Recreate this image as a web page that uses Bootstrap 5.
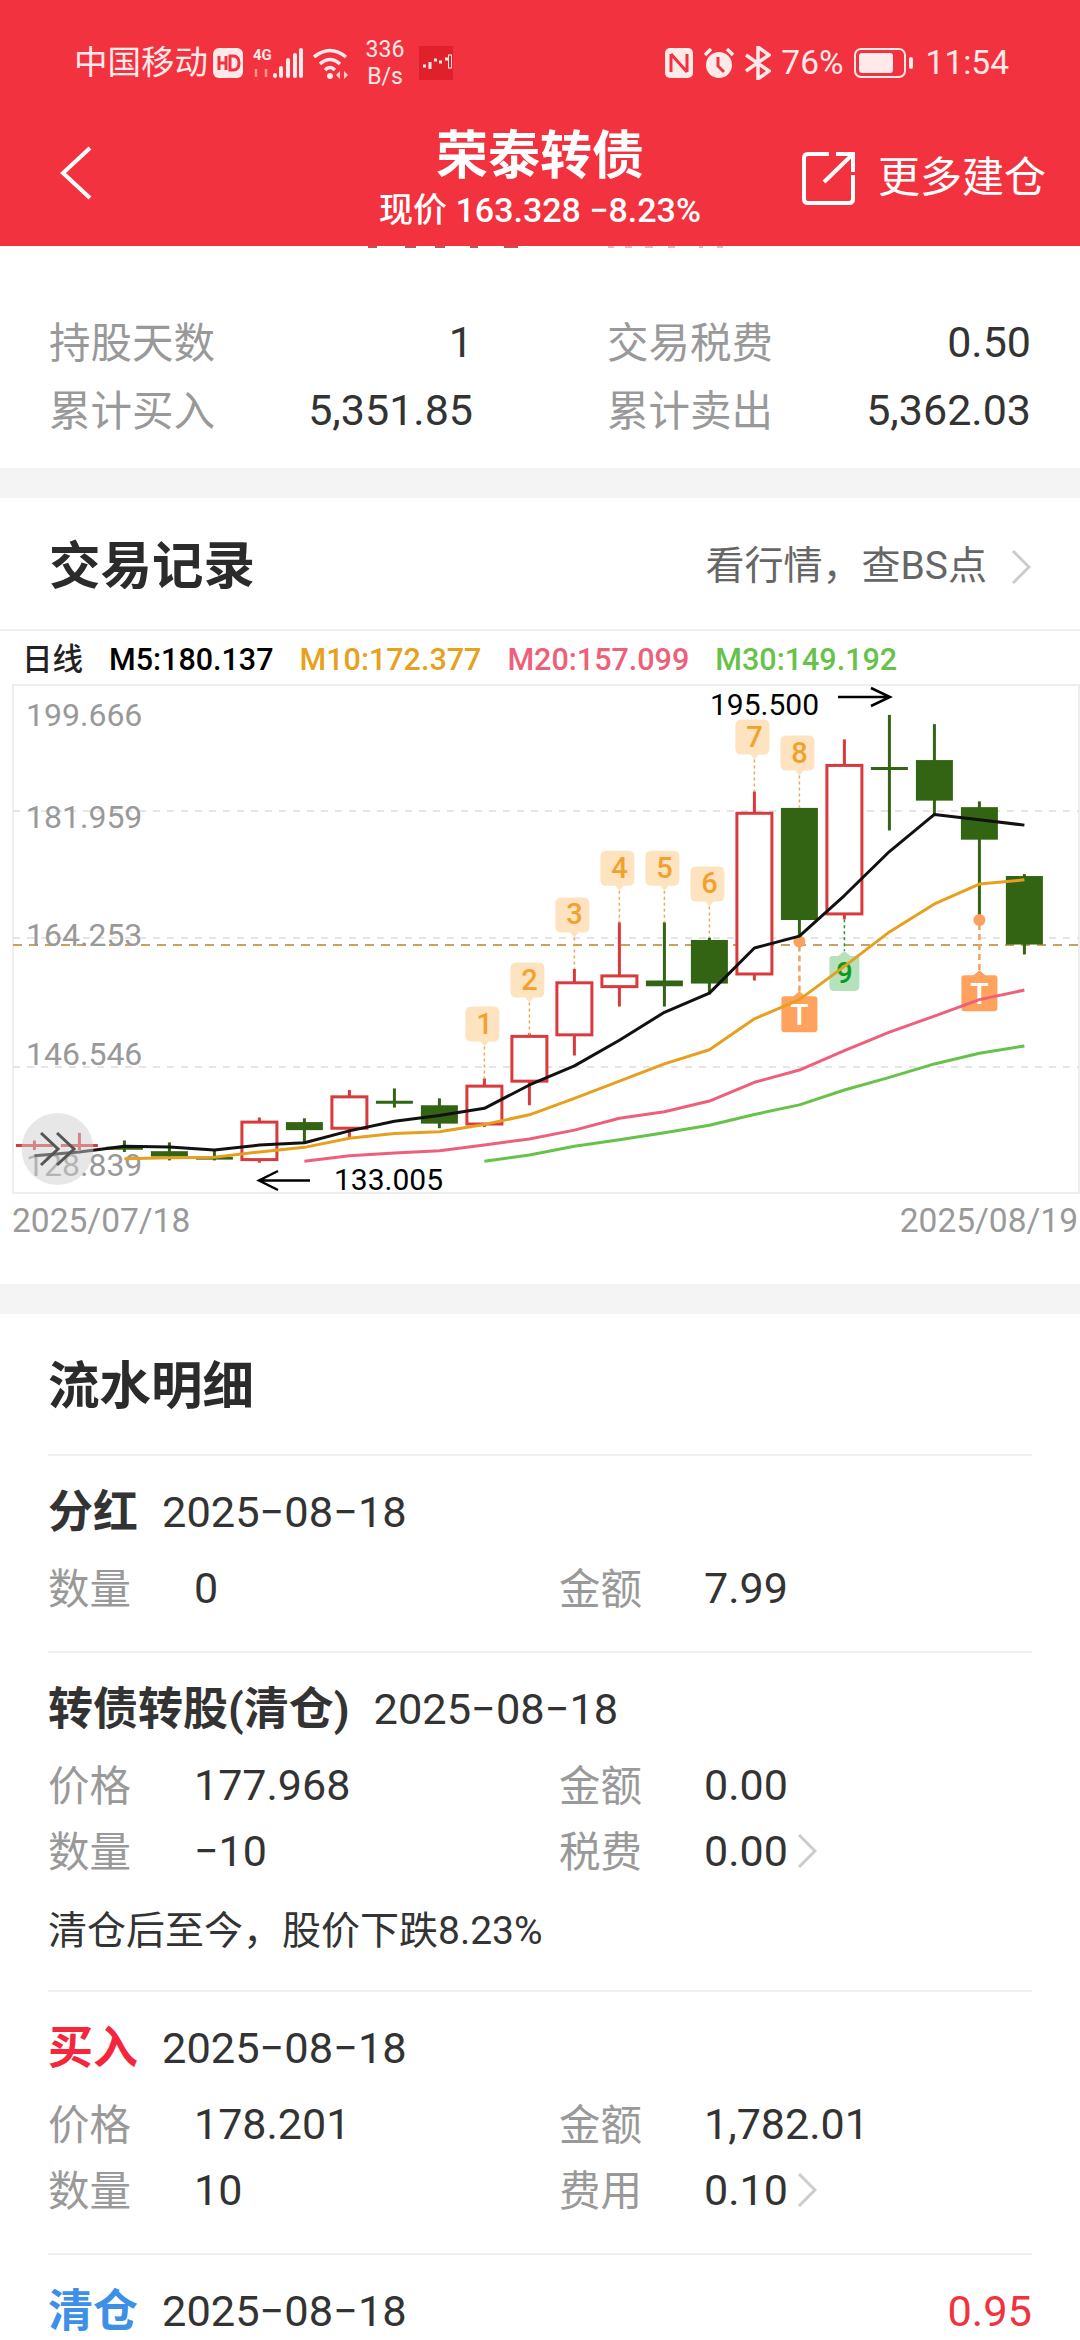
<!DOCTYPE html>
<html lang="zh-CN">
<head>
  <meta charset="UTF-8" />
  <meta name="viewport" content="width=device-width, initial-scale=1" />
  <title>荣泰转债</title>
  <link href="https://cdn.jsdelivr.net/npm/bootstrap@5.3.2/dist/css/bootstrap.min.css" rel="stylesheet" />
  <style>
    html, body { width: 1080px; height: 2340px; overflow: hidden; }
    body { font-family: Roboto, "Noto Sans CJK SC", sans-serif; color: #333; background: #fff; }
    svg { display: block; flex: none; }

    /* 顶部红色栏 */
    .top-bar { height: 246px; background: #f2323e; color: #fff; }
    .status-row { height: 126px; padding: 0 71px 0 74px; color: #ffe9e9; font-size: 33.5px; line-height: 1; }
    .status-left { gap: 10px; }
    .carrier-name { margin-right: -5px; }
    .status-right { gap: 10px; }
    .battery-icon { margin-right: 2px; }
    .speed-text { width: 40px; font-size: 23px; line-height: 27px; text-align: center; margin: 0 4px; }
    .nav-row { display: grid; grid-template-columns: 1fr auto 1fr; padding: 0 37px; }
    .nav-side { margin-top: 20px; }
    .nav-back { margin-left: 23px; }
    .nav-title { font-size: 52px; font-weight: 700; line-height: 56px; text-align: center; margin-top: 3px; }
    .nav-sub { font-size: 34px; font-weight: 500; line-height: 44px; text-align: center; margin-top: 3px; }
    .nav-more { font-size: 42px; gap: 22px; margin-right: -3px; }
    .clip-row { height: 4px; }

    /* 持仓统计 */
    .stat-box { height: 218px; padding: 60px 49px 0; }
    .stat-grid { display: grid; grid-template-columns: 424px 424px; column-gap: 134px; row-gap: 0; }
    .stat-cell { height: 68px; }
    .label-gray { color: #999; font-size: 41.5px; }
    .value-num { color: #333; font-size: 43px; margin-bottom: 4px; }
    .gap-band { height: 30px; background: #f4f4f4; }

    .head-row { height: 133px; padding: 6px 49px 0; border-bottom: 2px solid #f0f0f0; }
    .head-title { font-size: 51.5px; font-weight: 700; color: #2b2b2b; }
    .head-link { font-size: 39px; color: #666; gap: 24px; }

    /* K线 */
    .legend-row { height: 51px; padding: 8px 0 0 22px; column-gap: 26px; font-size: 30.5px; font-weight: 500; line-height: 1; color: #222; }
    .ma-10 { color: #e8a020; }
    .ma-20 { color: #ee6079; }
    .ma-30 { color: #66c24a; }
    .date-row { height: 88px; padding: 3px 2px 0 12px; font-size: 33.5px; line-height: 44px; color: #999; }

    /* 流水明细 */
    .flow-head { height: 140px; padding: 6px 48px 0; }
    .flow-wrap { padding: 0 48px; }
    .flow-item { border-top: 2px solid #f0f0f0; padding: 27px 0 29px; }
    .flow-title { height: 60px; gap: 24px; font-size: 43.4px; color: #333; }
    .flow-kind { font-size: 45px; font-weight: 700; }
    .kind-buy { color: #f5263c; }
    .kind-clear { color: #3d8fe8; }
    .flow-profit { color: #f2323e; }
    .flow-rows { margin-top: 13px; }
    .flow-grid { display: grid; grid-template-columns: 146px 365px 145px 1fr; height: 66px; align-items: center; }
    .flow-note { font-size: 39px; line-height: 60px; margin-top: 16px; color: #333; }
    .flow-value { gap: 9px; }
  </style>
</head>
<body>
  <header class="top-bar">
    <div class="status-row d-flex justify-content-between align-items-center">
      <div class="status-left d-flex align-items-center">
        <span class="carrier-name">中国移动</span>
        <svg width="30" height="30" viewBox="0 0 30 30"><rect width="30" height="30" rx="6" fill="#ffe9e9"/><path d="M6 8v14M6 15h7M13 8v14M17 8v14h3q6 0 6-7t-6-7z" fill="none" stroke="#f2323e" stroke-width="3"/></svg>
        <svg width="50" height="32" viewBox="0 0 50 32"><text x="0" y="13" font-size="15" font-weight="700" fill="#ffe9e9" font-family="Roboto">4G</text><path d="M3 30V22M13 30V22" stroke="#f98" stroke-width="2.5"/><rect x="20" y="26" width="4" height="5" rx="2" fill="#ffe9e9"/><rect x="26" y="19" width="4" height="12" rx="2" fill="#ffe9e9"/><rect x="33" y="11" width="4" height="20" rx="2" fill="#ffe9e9"/><rect x="40" y="6" width="4" height="25" rx="2" fill="#ffe9e9"/><rect x="46" y="1" width="4" height="30" rx="2" fill="#ffe9e9"/></svg>
        <svg width="38" height="32" viewBox="0 0 38 32"><path d="M1 10Q17-3 33 10M7 17Q17 8 27 17M12 23Q17 18 22 23" fill="none" stroke="#ffe9e9" stroke-width="3.5"/><circle cx="17" cy="29" r="3" fill="#ffe9e9"/><path d="M27 24v8l-4-4zM31 24v8l4-4z" fill="#ffd0d0"/></svg>
        <div class="speed-text">336<br>B/s</div>
        <svg width="34" height="34" viewBox="0 0 34 34"><rect width="34" height="34" fill="#e0202a"/><path d="M4 20h3M11 16v7M15 14h3M20 16h3M26 13h3" stroke="#ffe9e9" stroke-width="3"/><rect x="29.5" y="9" width="3" height="13" fill="none" stroke="#ffe9e9"/></svg>
      </div>
      <div class="status-right d-flex align-items-center">
        <svg width="28" height="30" viewBox="0 0 28 30"><rect width="28" height="30" rx="5" fill="#ffe9e9"/><path d="M6 6v18M22 6v18M6 6l16 18" fill="none" stroke="#f2323e" stroke-width="3"/></svg>
        <svg width="32" height="32" viewBox="0 0 32 32"><path d="M2 8l6-6M30 8l-6-6" stroke="#ffe9e9" stroke-width="3.5"/><circle cx="16" cy="18" r="13" fill="#ffe9e9"/><path d="M15 10v9l6 6" fill="none" stroke="#f2323e" stroke-width="3"/></svg>
        <svg width="26" height="34" viewBox="0 0 26 34"><path d="M1 9l23 16-11 8V1l11 8L1 25" fill="none" stroke="#ffe9e9" stroke-width="3.5"/></svg>
        <span>76%</span>
        <svg class="battery-icon" width="60" height="30" viewBox="0 0 60 30"><rect x="1" y="1" width="50" height="28" rx="6" fill="none" stroke="#ffe9e9" stroke-width="2"/><rect x="5" y="5" width="34" height="20" rx="3" fill="#ffe9e9"/><rect x="55" y="9" width="4" height="12" rx="2" fill="#ffe9e9"/></svg>
        <span>11:54</span>
      </div>
    </div>
    <div class="nav-row">
      <svg class="nav-back nav-side align-self-start" width="32" height="54" viewBox="0 0 32 54"><path d="M30 2L3 27l27 25" fill="none" stroke="#fff" stroke-width="4"/></svg>
      <div>
        <div class="nav-title">荣泰转债</div>
        <div class="nav-sub">现价 163.328 −8.23%</div>
      </div>
      <div class="nav-more nav-side d-flex justify-content-end align-items-center align-self-start">
        <svg width="54" height="54" viewBox="0 0 54 54"><path d="M27 3H6q-4 0-4 4v41q0 4 4 4h41q4 0 4-4V24M22 31L51 3M34 3h17v18" fill="none" stroke="#fff" stroke-width="4"/></svg>
        <span>更多建仓</span>
      </div>
    </div>
  </header>

  <svg class="clip-row" width="1080" height="4" viewBox="0 0 1080 4">
    <path d="M368 1h9M405 1h11M435 1h10M470 1h8M504 1h14" stroke="#c0505a" stroke-width="2"/>
    <path d="M608 1h6M625 1h7M645 1h8M668 1h7M699 1h4M717 1h6" stroke="#e8b8bc" stroke-width="2"/>
  </svg>

  <section class="stat-box">
    <div class="stat-grid">
      <div class="stat-cell d-flex justify-content-between align-items-center"><span class="label-gray">持股天数</span><span class="value-num">1</span></div>
      <div class="stat-cell d-flex justify-content-between align-items-center"><span class="label-gray">交易税费</span><span class="value-num">0.50</span></div>
      <div class="stat-cell d-flex justify-content-between align-items-center"><span class="label-gray">累计买入</span><span class="value-num">5,351.85</span></div>
      <div class="stat-cell d-flex justify-content-between align-items-center"><span class="label-gray">累计卖出</span><span class="value-num">5,362.03</span></div>
    </div>
  </section>
  <div class="gap-band"></div>

  <div class="head-row d-flex justify-content-between align-items-center">
    <span class="head-title">交易记录</span>
    <span class="head-link d-flex align-items-center">
      <span>看行情，查BS点</span>
      <svg width="20" height="34" viewBox="0 0 20 34"><path d="M2 1l16 16L2 33" fill="none" stroke="#ccc" stroke-width="3"/></svg>
    </span>
  </div>

  <div class="legend-row d-flex align-items-center">
    <span>日线</span>
    <span class="text-black">M5:180.137</span>
    <span class="ma-10">M10:172.377</span>
    <span class="ma-20">M20:157.099</span>
    <span class="ma-30">M30:149.192</span>
  </div>
  <svg id="kline" width="1080" height="514" viewBox="0 682 1080 514"></svg>
  <div class="date-row d-flex justify-content-between">
    <span>2025/07/18</span>
    <span>2025/08/19</span>
  </div>
  <div class="gap-band"></div>

  <div class="flow-head d-flex align-items-center"><span class="head-title">流水明细</span></div>
  <div class="flow-wrap">
    <div class="flow-item">
      <div class="flow-title d-flex align-items-center"><span class="flow-kind">分红</span><span>2025−08−18</span></div>
      <div class="flow-rows">
        <div class="flow-grid"><span class="label-gray">数量</span><span class="value-num">0</span><span class="label-gray">金额</span><span class="value-num">7.99</span></div>
      </div>
    </div>
    <div class="flow-item">
      <div class="flow-title d-flex align-items-center"><span class="flow-kind">转债转股(清仓)</span><span>2025−08−18</span></div>
      <div class="flow-rows">
        <div class="flow-grid"><span class="label-gray">价格</span><span class="value-num">177.968</span><span class="label-gray">金额</span><span class="value-num">0.00</span></div>
        <div class="flow-grid"><span class="label-gray">数量</span><span class="value-num">−10</span><span class="label-gray">税费</span><span class="value-num flow-value d-flex align-items-center">0.00<svg width="20" height="34" viewBox="0 0 20 34"><path d="M2 1l16 16L2 33" fill="none" stroke="#ccc" stroke-width="3"/></svg></span></div>
      </div>
      <div class="flow-note">清仓后至今，股价下跌8.23%</div>
    </div>
    <div class="flow-item">
      <div class="flow-title d-flex align-items-center"><span class="flow-kind kind-buy">买入</span><span>2025−08−18</span></div>
      <div class="flow-rows">
        <div class="flow-grid"><span class="label-gray">价格</span><span class="value-num">178.201</span><span class="label-gray">金额</span><span class="value-num">1,782.01</span></div>
        <div class="flow-grid"><span class="label-gray">数量</span><span class="value-num">10</span><span class="label-gray">费用</span><span class="value-num flow-value d-flex align-items-center">0.10<svg width="20" height="34" viewBox="0 0 20 34"><path d="M2 1l16 16L2 33" fill="none" stroke="#ccc" stroke-width="3"/></svg></span></div>
      </div>
    </div>
    <div class="flow-item">
      <div class="flow-title d-flex align-items-center"><span class="flow-kind kind-clear">清仓</span><span>2025−08−18</span><span class="flow-profit ms-auto">0.95</span></div>
    </div>
  </div>

  <script src="https://cdn.jsdelivr.net/npm/bootstrap@5.3.2/dist/js/bootstrap.bundle.min.js"></script>
  <script>
    // K线数据，y 值从放大图上量的，Y() 换算成页面坐标
    const Y = z => 620 + z / 2.613;
    const X = i => 34.4 + 45 * i;
    const RED = '#d93a3c', GREEN = '#336414';

    // [涨跌, 实体上, 实体下, 影线上, 影线下]
    const candles = [
      ['r', 1373, 1373, 1360, 1385], ['r', 1373, 1373, 1340, 1385], ['g', 1380, 1382, 1360, 1390],
      ['g', 1388, 1402, 1365, 1412], ['g', 1403, 1410, 1385, 1412], ['r', 1312, 1410, 1300, 1418],
      ['g', 1312, 1333, 1302, 1365], ['r', 1246, 1328, 1228, 1352], ['g', 1260, 1260, 1224, 1274],
      ['g', 1268, 1316, 1250, 1328], ['r', 1218, 1317, 1198, 1325], ['r', 1088, 1205, 1080, 1268],
      ['r', 948, 1084, 912, 1138], ['r', 930, 958, 790, 1010], ['g', 942, 957, 790, 1010],
      ['g', 836, 950, 830, 978], ['r', 505, 925, 448, 942], ['g', 491, 784, 491, 840],
      ['r', 380, 768, 312, 782], ['g', 388, 388, 248, 550], ['g', 366, 472, 272, 510],
      ['g', 489, 574, 474, 785], ['g', 669, 848, 664, 874]
    ];

    // 均线 [颜色, 线宽, 起始下标, y...]
    const maLines = [
      ['#111', 3, 0, [1400, 1390, 1375, 1377, 1385, 1372, 1366, 1335, 1310, 1295, 1276, 1215, 1165, 1098, 1025, 975, 857, 826, 720, 605, 508, 522, 536]],
      ['#e6a01e', 3, 2, [1408, 1405, 1404, 1390, 1378, 1354, 1342, 1337, 1318, 1293, 1250, 1205, 1160, 1123, 1042, 992, 905, 815, 742, 690, 679]],
      ['#ee6079', 3, 6, [1414, 1400, 1393, 1387, 1372, 1356, 1333, 1302, 1285, 1257, 1208, 1176, 1125, 1077, 1035, 992, 967]],
      ['#66c24a', 3, 10, [1414, 1398, 1375, 1358, 1340, 1320, 1292, 1267, 1228, 1195, 1160, 1132, 1113]]
    ];

    // 编号标记 [文字, 下标, 框顶, 虚线终点]
    const peachTags = [
      ['1', 10, 1010, 1198], ['2', 11, 895, 1085], ['3', 12, 725, 912], ['4', 13, 603, 790],
      ['5', 14, 603, 790], ['6', 15, 644, 830], ['7', 16, 260, 448], ['8', 17, 302, 490]
    ];

    let out = '';
    const line = (x1, y1, x2, y2, c, w, dash) =>
      `<line x1="${x1}" y1="${y1}" x2="${x2}" y2="${y2}" stroke="${c}" stroke-width="${w}"${dash ? ` stroke-dasharray="${dash}"` : ''}/>`;
    const label = (x, y, t, size, c, extra = '') =>
      `<text x="${x}" y="${y}" font-size="${size}" fill="${c}" font-family="Roboto, sans-serif" dominant-baseline="central" ${extra}>${t}</text>`;

    // 边框和网格
    out += `<rect x="13" y="685" width="1066" height="508" fill="none" stroke="#eee" stroke-width="2"/>`;
    [811, 938, 1067].forEach(y => out += line(13, y, 1079, y, '#ddd', 1.5, '7 7'));
    out += line(13, 945, 1079, 945, '#c9a063', 2, '9 7');
    [[715, '199.666'], [817, '181.959'], [935, '164.253'], [1054, '146.546'], [1165, '128.839']]
      .forEach(([y, t]) => out += label(26, y, t, 32, '#999'));

    // 蜡烛
    candles.forEach(([kind, top, bottom, hi, lo], i) => {
      const x = X(i), c = kind === 'r' ? RED : GREEN;
      out += line(x, Y(hi), x, Y(lo), c, 3);
      if (top === bottom || bottom - top < 4) {
        out += line(x - 18.5, Y(top), x + 18.5, Y(top), c, 3);
      } else if (kind === 'r') {
        out += `<rect x="${x - 17.5}" y="${Y(top)}" width="35" height="${(bottom - top) / 2.613}" fill="#fff" stroke="${c}" stroke-width="3"/>`;
      } else {
        out += `<rect x="${x - 18.5}" y="${Y(top)}" width="37" height="${(bottom - top) / 2.613}" fill="${c}"/>`;
      }
    });

    // 标记
    const tagDown = (x, y, w, h, fill) =>
      `<path d="M${x - w / 2 + 6} ${y}h${w - 12}q6 0 6 6v${h - 12}q0 6-6 6h-5l-4 5l-4-5h-${w - 21}q-6 0-6-6v-${h - 12}q0-6 6-6z" fill="${fill}"/>`;
    const tagUp = (x, y, w, h, fill) =>
      `<path d="M${x} ${y - 5}l6 5h${w / 2 - 9}q3 0 3 3v${h - 6}q0 3-3 3h-${w - 6}q-3 0-3-3v-${h - 6}q0-3 3-3h${w / 2 - 9}z" fill="${fill}"/>`;

    peachTags.forEach(([t, i, top, end]) => {
      const x = X(i), y = Y(top);
      out += line(x, y + 40, x, Y(end), '#e8ac55', 1.5, '3 3');
      out += tagDown(x, y, 30, 35, '#fde3bf');
      out += label(x, y + 17, t, 29, '#f2a12e', 'text-anchor="middle" font-weight="500"');
    });

    // 绿色 9
    out += line(X(18), Y(782), X(18), Y(865), '#1e9a2e', 1.5, '3 3');
    out += `<path d="M${X(18)} ${Y(865)}l6 5h6q3 0 3 3v27q0 5-5 5h-20q-5 0-5-5v-27q0-3 3-3h6z" fill="#b5e2bc"/>`;
    out += label(X(18), Y(922), '9', 29, '#0a9a1e', 'text-anchor="middle" font-weight="500"');

    // 做T
    [[17, 840, 983], [21, 784, 928]].forEach(([i, dot, top]) => {
      const x = X(i);
      out += `<circle cx="${x}" cy="${Y(dot)}" r="6" fill="#f9a25f"/>`;
      out += line(x, Y(dot) + 4, x, Y(top), '#f4a060', 2.5, '6 4');
      out += tagUp(x, Y(top), 36, 36, '#ffa25e');
      out += label(x, Y(top) + 18, 'T', 30, '#fff', 'text-anchor="middle" font-weight="500"');
    });

    // 均线
    maLines.forEach(([c, w, start, ys]) => {
      const pts = ys.map((z, k) => `${X(start + k)},${Y(z)}`).join(' ');
      out += `<polyline points="${pts}" fill="none" stroke="${c}" stroke-width="${w}" stroke-linejoin="round"/>`;
    });

    // 最高最低价箭头
    out += `<path d="M310 1180.5H260M278 1171l-19 9.5 19 9.5" fill="none" stroke="#000" stroke-width="2.5"/>`;
    out += label(334, 1179, '133.005', 30, '#000');
    out += label(710, 704, '195.500', 30, '#000');
    out += `<path d="M838 697h51M871 688l19 9-19 9" fill="none" stroke="#000" stroke-width="2.5"/>`;

    // 展开按钮
    out += `<circle cx="57.5" cy="1149" r="36" fill="#cfcfcf" fill-opacity=".5"/>`;
    out += `<path d="M41 1133l17 16-17 16M57 1133l17 16-17 16" fill="none" stroke="#555" stroke-width="3"/>`;

    document.getElementById('kline').innerHTML = out;
  </script>
</body>
</html>
